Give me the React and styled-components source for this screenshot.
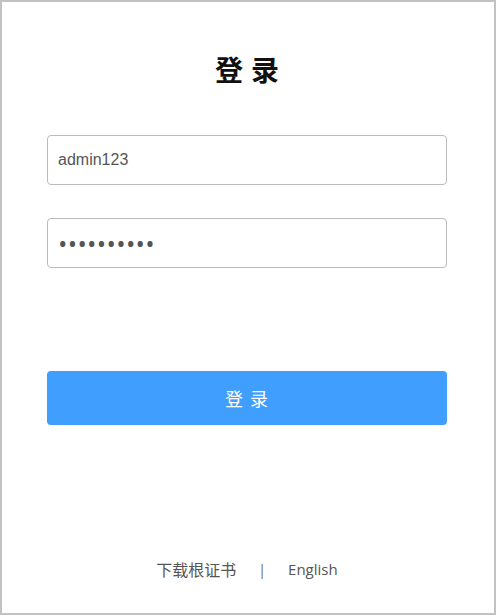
import React from 'react';
import styled, { createGlobalStyle } from 'styled-components';

const GlobalStyle = createGlobalStyle`
  html, body {
    margin: 0;
    padding: 0;
    background: #fff;
  }
  * {
    box-sizing: border-box;
  }
`;

const Frame = styled.div`
  width: 496px;
  height: 615px;
  border: 2px solid #c2c2c2;
  padding-right: 2px;
  background: #fff;
  display: flex;
  flex-direction: column;
  align-items: center;
  font-family: 'Open Sans', 'Noto Sans CJK SC', sans-serif;
`;

const Title = styled.h1`
  margin: 49px 0 0;
  font-size: 28px;
  line-height: 36px;
  font-weight: 700;
  letter-spacing: 8px;
  padding-left: 8px;
  color: #111;
  font-family: 'Noto Sans CJK SC', sans-serif;
`;

const Form = styled.form`
  width: 400px;
  margin-top: 48px;
  display: flex;
  flex-direction: column;
  gap: 33px;
`;

const Field = styled.input`
  width: 100%;
  height: 50px;
  border: 1px solid #bbb;
  border-radius: 4px;
  padding: 0 10px;
  font-size: ${(p) => (p.type === 'password' ? '25px' : '16px')};
  letter-spacing: ${(p) => (p.type === 'password' ? '0.3px' : '0')};
  color: #555;
  font-family: ${(p) => (p.type === 'password' ? "'Open Sans'" : "'Liberation Sans'")}, sans-serif;
  outline: none;
`;

const Submit = styled.button`
  width: 400px;
  height: 54px;
  margin-top: 103px;
  border: none;
  border-radius: 4px;
  background: #409eff;
  color: #fff;
  font-size: 18px;
  letter-spacing: 7px;
  padding-left: 12px;
  font-family: 'Noto Sans CJK SC', sans-serif;
  cursor: pointer;
`;

const Footer = styled.div`
  margin-top: auto;
  margin-bottom: 32px;
  display: flex;
  align-items: center;
  gap: 22px;
  font-size: 15px;
  color: #555;
  font-family: 'Open Sans', 'Noto Sans CJK SC', sans-serif;
`;

const FooterLink = styled.a`
  color: #555;
  font-size: ${(p) => (p.cjk ? '16px' : '15px')};
  text-decoration: none;
  cursor: pointer;
`;

const Divider = styled.span`
  color: #666;
  font-size: 14px;
`;

export default function App() {
  return (
    <>
      <GlobalStyle />
      <Frame>
        <Title>登录</Title>
        <Form onSubmit={(e) => e.preventDefault()}>
          <Field type="text" defaultValue="admin123" />
          <Field type="password" defaultValue="admin12345" />
        </Form>
        <Submit type="button">登录</Submit>
        <Footer>
          <FooterLink cjk>下载根证书</FooterLink>
          <Divider>|</Divider>
          <FooterLink>English</FooterLink>
        </Footer>
      </Frame>
    </>
  );
}
